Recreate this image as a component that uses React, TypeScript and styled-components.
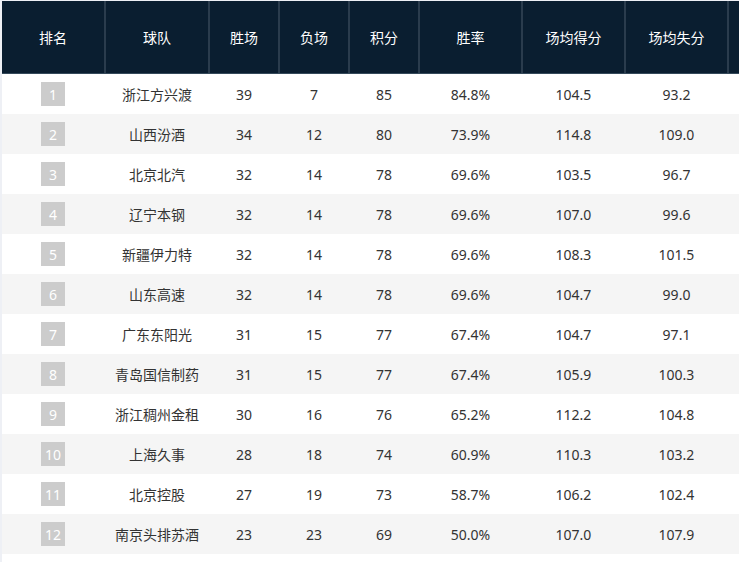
import React from 'react'
import styled, { createGlobalStyle } from 'styled-components'

const GlobalStyle = createGlobalStyle`
  html, body {
    margin: 0;
    padding: 0;
    background: #eef0f5;
    overflow: hidden;
  }
  body {
    font-family: "Noto Sans", "Noto Sans CJK SC", sans-serif;
  }
`

type Team = {
  rank: number
  name: string
  win: number
  loss: number
  points: number
  rate: string
  scored: string
  lost: string
}

const teams: Team[] = [
  { rank: 1, name: '浙江方兴渡', win: 39, loss: 7, points: 85, rate: '84.8%', scored: '104.5', lost: '93.2' },
  { rank: 2, name: '山西汾酒', win: 34, loss: 12, points: 80, rate: '73.9%', scored: '114.8', lost: '109.0' },
  { rank: 3, name: '北京北汽', win: 32, loss: 14, points: 78, rate: '69.6%', scored: '103.5', lost: '96.7' },
  { rank: 4, name: '辽宁本钢', win: 32, loss: 14, points: 78, rate: '69.6%', scored: '107.0', lost: '99.6' },
  { rank: 5, name: '新疆伊力特', win: 32, loss: 14, points: 78, rate: '69.6%', scored: '108.3', lost: '101.5' },
  { rank: 6, name: '山东高速', win: 32, loss: 14, points: 78, rate: '69.6%', scored: '104.7', lost: '99.0' },
  { rank: 7, name: '广东东阳光', win: 31, loss: 15, points: 77, rate: '67.4%', scored: '104.7', lost: '97.1' },
  { rank: 8, name: '青岛国信制药', win: 31, loss: 15, points: 77, rate: '67.4%', scored: '105.9', lost: '100.3' },
  { rank: 9, name: '浙江稠州金租', win: 30, loss: 16, points: 76, rate: '65.2%', scored: '112.2', lost: '104.8' },
  { rank: 10, name: '上海久事', win: 28, loss: 18, points: 74, rate: '60.9%', scored: '110.3', lost: '103.2' },
  { rank: 11, name: '北京控股', win: 27, loss: 19, points: 73, rate: '58.7%', scored: '106.2', lost: '102.4' },
  { rank: 12, name: '南京头排苏酒', win: 23, loss: 23, points: 69, rate: '50.0%', scored: '107.0', lost: '107.9' },
]

const headers = ['排名', '球队', '胜场', '负场', '积分', '胜率', '场均得分', '场均失分', '']

// shared column template for header and rows
const cols = '104px 104px 70px 70px 70px 103px 103px 103px 100px'

const Page = styled.div`
  margin: 1px 0 0 2px;
  min-height: 561px;
  width: 830px;
  background: #fff;
`

const HeadRow = styled.div`
  display: grid;
  grid-template-columns: ${cols};
  height: 73px;
  background: #0a1e30;
  border-bottom: 1px solid #34495a;
  box-sizing: border-box;
`

const HeadCell = styled.div`
  display: flex;
  align-items: center;
  justify-content: center;
  color: #fff;
  font-size: 14px;
  border-right: 2px solid #2a3c4d;
  box-sizing: border-box;
  &:last-child {
    border-right: none;
  }
`

const Row = styled.div<{ $even: boolean }>`
  display: grid;
  grid-template-columns: ${cols};
  height: 40px;
  background: ${(p) => (p.$even ? '#f5f5f5' : '#fff')};
`

const Cell = styled.div`
  display: flex;
  align-items: center;
  justify-content: center;
  font-size: 14px;
  color: #333;
  padding-right: 2px;
`

const RankBadge = styled.span`
  display: inline-flex;
  align-items: center;
  justify-content: center;
  width: 24px;
  height: 24px;
  background: #cccccc;
  color: #fff;
  font-size: 14px;
`

export default function App() {
  return (
    <>
      <GlobalStyle />
      <Page>
        <HeadRow>
          {headers.map((h, i) => (
            <HeadCell key={i}>{h}</HeadCell>
          ))}
        </HeadRow>
        {teams.map((t, i) => (
          <Row key={t.rank} $even={i % 2 === 1}>
            <Cell>
              <RankBadge>{t.rank}</RankBadge>
            </Cell>
            <Cell>{t.name}</Cell>
            <Cell>{t.win}</Cell>
            <Cell>{t.loss}</Cell>
            <Cell>{t.points}</Cell>
            <Cell>{t.rate}</Cell>
            <Cell>{t.scored}</Cell>
            <Cell>{t.lost}</Cell>
            <Cell />
          </Row>
        ))}
      </Page>
    </>
  )
}
